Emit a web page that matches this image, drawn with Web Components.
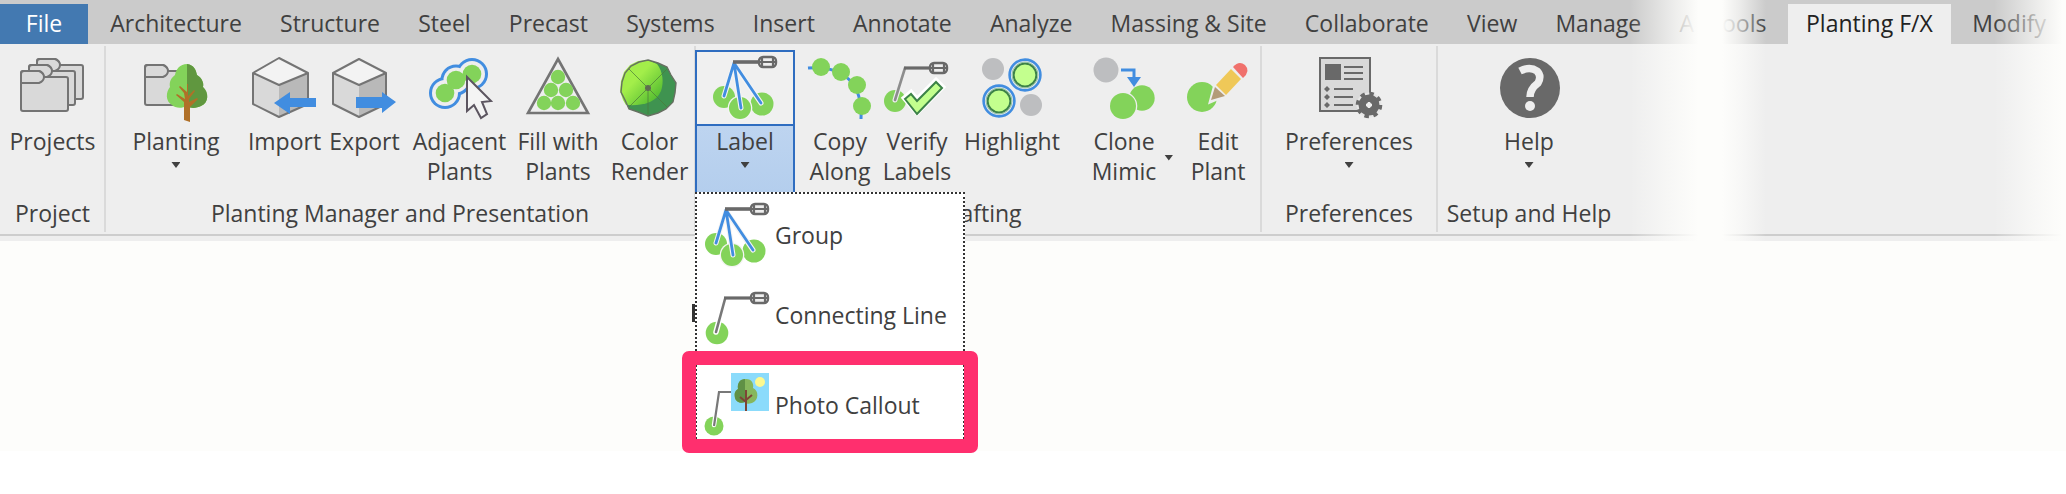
<!DOCTYPE html>
<html lang="en">
<head>
<meta charset="utf-8">
<title>Planting F/X</title>
<style>
  body {
    margin: 0;
    min-height: 100vh;
    background: #fff;
    color: #404040;
    font: 23px/30px "Open Sans", "Noto Sans", sans-serif;
  }
</style>
</head>
<body>
<planting-app></planting-app>

<script>
const CAPSULE = (x, y) => `
  <rect x="${x + 1}" y="${y - 5}" width="17" height="10" rx="4" fill="#eee" stroke="#696969" stroke-width="2.4"/>
  <path d="M${x} ${y}h19M${x + 4} ${y - 5}v10M${x + 15} ${y - 5}v10" stroke="#696969" stroke-width="2.2"/>`;

const FOLDER = (x, y, w, h) => `
  <g transform="translate(${x} ${y})" fill="#d9d9d9" stroke="#747474" stroke-width="2" stroke-linejoin="round">
    <path d="M0 2q0-2 2-2h16q2 0 3 2l2 4h${w - 25}q2 0 2 2v${h - 10}q0 2-2 2H2q-2 0-2-2z"/>
    <path d="M0 12V3q0-3 3-3h15q5 2 5 6t-5 6z"/>
  </g>`;

const CUBE = (w, top) => `
  <path d="M1 17L27 ${top}L${w} 17L27 29z" fill="#f3f3f3"/>
  <path d="M1 17L27 29V61L1 48z" fill="#d9d9d9"/>
  <path d="M27 29L${w} 17V48L27 61z" fill="#b9b9b9"/>
  <path d="M27 ${top}L${w} 17V48L27 61L1 48V17zM1 17L27 29L${w} 17" fill="none" stroke="#747474" stroke-width="2" stroke-linejoin="round"/>`;

const TARGET = (x, y) => `
  <circle cx="${x}" cy="${y}" r="15.4" fill="#eee" stroke="#418de0" stroke-width="2.6"/>
  <circle cx="${x}" cy="${y}" r="11.4" fill="#c3ff8e" stroke="#3c8248" stroke-width="2"/>
  <circle cx="${x}" cy="${y}" r="13" fill="none" stroke="#8ec0a0" stroke-width="1"/>`;

const ICONS = {
  projects: FOLDER(17, 3, 46, 40) + FOLDER(9, 9, 46, 40) + FOLDER(1, 15, 47, 40),
  planting: FOLDER(1, 9, 46, 40) + `
    <path d="M43 8c7 1 9 6 10 11 5 3 7 8 6 12 6 5 6 16-2 19-4 2-10 3-14 0-6 3-12 2-15-1-7-4-6-13-2-18-1-5 1-9 5-12 1-6 5-11 12-11z" fill="#83d35a"/>
    <path d="M43 8c7 1 9 6 10 11 5 3 7 8 6 12 6 5 6 16-2 19-4 2-10 3-14 0z" fill="#60973f"/>
    <path d="M40 64V46l-8-7 1-1 8 5-1-6-5-6 1-1 7 6v-8h1v12l6-6 1 1-6 8v3l8-4 1 1-8 8v15z" fill="#b07028"/>`,
  import: CUBE(56, 2) + '<path d="M22 47L38 36v6h26v9H38v7z" fill="#418de0"/>',
  export: CUBE(54, 3) + '<path d="M64 46L50 36v5H24v11h26v5z" fill="#418de0"/>',
  adjacent: `
    <g fill="#418de0"><circle cx="17" cy="37" r="16"/><circle cx="28" cy="24" r="15.5"/><circle cx="44" cy="18" r="16"/></g>
    <g fill="#eee"><circle cx="17" cy="37" r="13"/><circle cx="28" cy="24" r="12.5"/><circle cx="44" cy="18" r="13"/></g>
    <g fill="#83d35a"><circle cx="17" cy="37" r="9.3"/><circle cx="28" cy="24" r="9.3"/><circle cx="44" cy="18" r="9.3"/></g>
    <path d="M39 21v34l7-6 7 13 6-4-5-12 9-1z" fill="#f4f4f4" stroke="#5c5560" stroke-width="2"/>`,
  fill: `
    <path d="M32 3L62 57H2z" fill="none" stroke="#747474" stroke-width="2.6"/>
    <g fill="#83d35a">
      <circle cx="32" cy="21" r="7.2"/><circle cx="25" cy="34" r="7.2"/><circle cx="40" cy="34" r="7.2"/>
      <circle cx="18" cy="47" r="7.2"/><circle cx="32" cy="47" r="7.2"/><circle cx="47" cy="47" r="7.2"/>
    </g>`,
  render: `
    <defs><linearGradient id="lit" x1="0" y1="0" x2="1" y2="1">
      <stop offset=".4" stop-color="#a3ee4a"/><stop offset=".9" stop-color="#4fb92f"/></linearGradient></defs>
    <path d="M31 4l10 3 9 4 4 8 5 8-1 10-2 9-7 7-8 4-10 3-10-4-9-3-4-9-4-8 1-10 3-9 6-7 8-4z" fill="#3f9350"/>
    <path d="M31 4l9 4c6 8 7 18 4 27-5 11-16 15-35 14l-3-5-3-9 1-10 3-9 6-7 8-4z" fill="url(#lit)"/>
    <path d="M31 32V58M31 32L12 13M31 32L50 51M31 32L12 51M31 32L50 13" stroke="#4a7a3a" stroke-width=".7"/>
    <path d="M31 4l10 3 9 4 4 8 5 8-1 10-2 9-7 7-8 4-10 3-10-4-9-3-4-9-4-8 1-10 3-9 6-7 8-4z" fill="none" stroke="#667061" stroke-width="1.4"/>
    <circle cx="31" cy="32" r="3" fill="#5e6d50"/>`,
  label: `
    <circle cx="11" cy="41" r="11" fill="#83d35a"/><circle cx="49" cy="48" r="11.5" fill="#83d35a"/>
    <circle cx="27" cy="52" r="12.3" fill="#f4f4f4"/><circle cx="27" cy="52" r="11" fill="#83d35a"/>
    <path d="M21 8L11 40M21 8l7 44M21 8l27 39" stroke="#f4f4f4" stroke-width="5" stroke-linecap="round"/>
    <path d="M21 7L11 40M21 7l7 45M21 7l27 40" stroke="#418de0" stroke-width="2.8" stroke-linecap="round"/>
    <path d="M20 6h26" stroke="#696969" stroke-width="3.6"/>` + CAPSULE(45, 6),
  copy: `
    <path d="M0 12C36 9 55 28 53 63" fill="none" stroke="#418de0" stroke-width="3"/>
    <g fill="#83d35a"><circle cx="13" cy="11" r="9"/><circle cx="33" cy="16" r="9"/><circle cx="49" cy="29" r="9"/><circle cx="54" cy="50" r="9"/></g>`,
  verify: `
    <circle cx="10" cy="45" r="11" fill="#83d35a"/>
    <path d="M10 44L20 12" stroke="#eee" stroke-width="5" stroke-linecap="round"/>
    <path d="M10 44L20 12" stroke="#8d8d8d" stroke-width="2.6" stroke-linecap="round"/>
    <path d="M19 12h27" stroke="#696969" stroke-width="3.2"/>` + CAPSULE(44, 12) + `
    <path d="M20 42l6-5 6 7 19-19 6 6-25 25z" fill="#fff" stroke="#fff" stroke-width="6"/>
    <path d="M20 43l6-5 6 7 19-19 6 6-25 26z" fill="#c3ff8e" stroke="#3c8248" stroke-width="2"/>`,
  highlight: `
    <circle cx="13" cy="13" r="11" fill="#bdbec0"/><circle cx="51" cy="49" r="11" fill="#bdbec0"/>` + TARGET(45, 19) + TARGET(19, 45),
  clone: `
    <circle cx="14" cy="14" r="12.5" fill="#bdbec0"/>
    <circle cx="50" cy="42" r="12.7" fill="#83d35a"/>
    <circle cx="31" cy="50" r="14.3" fill="#eee"/><circle cx="31" cy="50" r="13" fill="#83d35a"/>
    <path d="M29 14h13v8" fill="none" stroke="#418de0" stroke-width="3"/>
    <path d="M35 21h14l-7 10z" fill="#418de0"/>`,
  edit: `
    <circle cx="16" cy="41" r="15" fill="#83d35a"/>
    <path d="M25 45L29 30 47 12l9 9-17 18z" fill="#eee" stroke="#eee" stroke-width="4"/>
    <path d="M25 44L29 31l10 9z" fill="#b39b78"/>
    <path d="M30 29L45 13l10 10-15 16z" fill="#efc858"/>
    <path d="M47 11q6-7 12-2 6 6-2 13z" fill="#f0716c"/>`,
  preferences: `
    <rect x="3" y="2" width="50" height="53" fill="#d9d9d9" stroke="#696969" stroke-width="2"/>
    <path d="M8 8h16v16H8z" fill="#696969"/>
    <path d="M27 11h19M27 17h19M27 23h19M17 33h19M17 41h19M17 49h19" stroke="#696969" stroke-width="2"/>
    <path d="M10 30l3 3-3 3-3-3zM10 38l3 3-3 3-3-3zM10 46l3 3-3 3-3-3z" fill="#696969"/>
    <circle cx="52" cy="49" r="12.5" fill="#e6e6e6"/>
    <circle cx="52" cy="49" r="11.3" fill="none" stroke="#696969" stroke-width="4" stroke-dasharray="4.4 4.47"/>
    <circle cx="52" cy="49" r="6.5" fill="none" stroke="#696969" stroke-width="8"/>
    <path d="M52 46v6M49 49h6" stroke="#eee" stroke-width="2.4"/>`,
  help: `
    <circle cx="33" cy="32" r="30" fill="#696969"/>
    <path d="M23 15q10-5 17 0 5 5 1 12-8 6-8 14" fill="none" stroke="#eee" stroke-width="7.5"/>
    <circle cx="33" cy="50" r="5" fill="#eee"/>`,
  connecting: `
    <circle cx="12" cy="50" r="11.3" fill="#83d35a"/>
    <path d="M11 49L20 16" stroke="#fff" stroke-width="5.5" stroke-linecap="round"/>
    <path d="M11 49L20 16" stroke="#787878" stroke-width="2.6" stroke-linecap="round"/>
    <path d="M19 15h27" stroke="#696969" stroke-width="3.2"/>` + CAPSULE(45, 15),
  photo: `
    <circle cx="9" cy="53" r="9.5" fill="#83d35a"/>
    <path d="M9 52L14 19" stroke="#fff" stroke-width="4.5" stroke-linecap="round"/>
    <path d="M9 53L14 19H26" fill="none" stroke="#787878" stroke-width="2.2"/>
    <path d="M26 0h38v38H26z" fill="#8bdbfb"/>
    <circle cx="55" cy="9" r="5" fill="#fdf98f"/>
    <path d="M41 6c6 0 8 5 7 9 6 2 6 13-1 15-4 1-6 1-7-1-4 2-9 0-10-4-1-5 0-7 3-9-1-6 3-10 8-10z" fill="#86b75c"/>
    <path d="M40 6c-5 0-8 4-7 10-3 2-4 4-3 9 1 4 6 6 10 4z" fill="#5f9145"/>
    <path d="M41 38V17M41 29l-6-5M41 27l6-5" stroke="#7d4436" stroke-width="2"/>`,
};

class FxIcon extends HTMLElement {
  constructor() {
    super();
    this.root = this.attachShadow({mode: 'open'});
    this.root.innerHTML = `
      <style>
        :host { display: block; width: 64px; height: 64px; flex: none; }
        svg { display: block; width: 100%; height: 100%; overflow: visible; }
      </style>
      <svg viewBox="0 0 64 64" aria-hidden="true"></svg>
    `;
  }

  static get observedAttributes() {
    return ['name'];
  }

  attributeChangedCallback(name, oldVal, newVal) {
    this.root.querySelector('svg').innerHTML = ICONS[newVal] || '';
  }
}

class RibbonTab extends HTMLElement {
  constructor() {
    super();
    this.root = this.attachShadow({mode: 'open'});
    this.root.innerHTML = `
      <style>
        :host { display: flex; }
        button {
          padding: 0 0 2px;
          border: 0;
          background: none;
          color: inherit;
          font: inherit;
          white-space: nowrap;
          cursor: pointer;
        }
        :host([kind=file]) button { width: 88px; background: #4379b1; color: #fff; }
        :host([kind=active]) button { padding: 0 18px 2px; background: #eee; color: #222; }
      </style>
      <button type="button"><slot></slot></button>
    `;
  }
}

class RibbonSection extends HTMLElement {
  constructor() {
    super();
    this.root = this.attachShadow({mode: 'open'});
    this.root.innerHTML = `
      <style>
        :host {
          position: relative;
          display: flex;
          flex-direction: column;
          min-width: 0;
          background: #eee;
        }
        nav {
          display: flex;
          justify-content: space-between;
          box-sizing: border-box;
          height: 44px;
          padding: 4px var(--tabs-end, 0) 0 0;
          background: #cbcbcb;
        }
        .panels {
          display: flex;
          flex: 1;
          box-sizing: border-box;
          min-height: 192px;
          margin-bottom: 5px;
          padding-top: 2px;
          border-bottom: 2px solid #cdcdcd;
        }
        /* soft torn edges where the ribbon is cut */
        :host::before, :host::after {
          content: "";
          position: absolute;
          top: 0;
          bottom: 0;
          pointer-events: none;
        }
        :host::before {
          left: 0;
          width: var(--fade-left, 0);
          background: linear-gradient(to left, #fdfdfb00, #fdfdfbaa 60%, #fdfdfb);
        }
        :host::after {
          right: 0;
          width: var(--fade-right, 0);
          background: linear-gradient(to right, #fdfdfb00, #fdfdfbaa 60%, #fdfdfb 95%);
        }
      </style>
      <nav><slot name="tab"></slot></nav>
      <div class="panels"><slot></slot></div>
    `;
  }
}

class RibbonPanel extends HTMLElement {
  constructor() {
    super();
    this.root = this.attachShadow({mode: 'open'});
    this.root.innerHTML = `
      <style>
        :host {
          display: flex;
          flex-direction: column;
          min-width: 0;
          margin-bottom: 2px;
          box-shadow: 1px 0 #dadada, inset -1px 0 #dadada;
        }
        :host([last]) { box-shadow: none; }
        .tools { display: flex; flex: 1; }
        .tools::after { content: ""; flex: var(--tail, 0) 1 0; }
        .title { height: 34px; padding-top: 6px; text-align: center; white-space: nowrap; }
      </style>
      <div class="tools"><slot></slot></div>
      <div class="title"><slot name="title"></slot></div>
    `;
  }
}

class RibbonTool extends HTMLElement {
  constructor() {
    super();
    this.root = this.attachShadow({mode: 'open'});
    this.root.innerHTML = `
      <style>
        :host {
          position: relative;
          display: flex;
          justify-content: center;
          min-width: 0;
        }
        button {
          display: flex;
          flex-direction: column;
          align-items: center;
          padding: 10px 0 0;
          border: 0;
          background: none;
          color: inherit;
          font: inherit;
          white-space: nowrap;
          cursor: pointer;
        }
        .caption { padding-top: 6px; }
        .arrow {
          display: none;
          width: 9px;
          height: 6px;
          margin-top: 6px;
          background: #404040;
          clip-path: polygon(0 0, 100% 0, 50% 100%);
        }
        :host([arrow]) .arrow { display: block; }
        :host([arrow=side]) button {
          display: grid;
          grid-template-columns: auto 9px;
          column-gap: 8px;
          align-content: start;
          justify-items: center;
        }
        :host([arrow=side]) .arrow { margin-top: 9px; align-self: center; }
        :host([arrow=side]) .picture { grid-column: 1; }
        :host([arrow=side]) .caption { grid-column: 1; }

        :host([open]) button {
          width: 100%;
          margin-top: 4px;
          padding: 0;
          border: 2px solid #2f6dc0;
          border-bottom: 0;
          background: linear-gradient(#c8dbf3, #b4ceed);
        }
        :host([open]) .picture {
          display: flex;
          justify-content: center;
          box-sizing: border-box;
          width: 100%;
          height: 74px;
          padding-top: 4px;
          border-bottom: 2px solid #2f6dc0;
          background: #f0f0f0;
        }
        :host([open]) .caption { padding-top: 0; }
      </style>
      <button type="button">
        <span class="picture"><fx-icon></fx-icon></span>
        <span class="caption"><slot></slot></span>
        <span class="arrow"></span>
      </button>
      <slot name="menu"></slot>
    `;
    this.root.querySelector('fx-icon').setAttribute('name', this.getAttribute('icon'));
  }
}

class DropMenu extends HTMLElement {
  constructor() {
    super();
    this.root = this.attachShadow({mode: 'open'});
    this.root.innerHTML = `
      <style>
        :host {
          position: absolute;
          z-index: 2;
          top: 100%;
          left: 0;
          box-sizing: border-box;
          width: 270px;
          padding-top: 1px;
          border: 2px dotted #333;
          border-bottom: 0;
          background: #fff;
        }
      </style>
      <slot></slot>
    `;
  }
}

class MenuItem extends HTMLElement {
  constructor() {
    super();
    this.root = this.attachShadow({mode: 'open'});
    this.root.innerHTML = `
      <style>
        :host { display: block; }
        :host([marked]) {
          margin: -4px -15px -14px;
          border: 14px solid #ff2f6e;
          border-radius: 7px;
        }
        button {
          display: flex;
          align-items: center;
          gap: 6px;
          width: 100%;
          height: 80px;
          padding: 0 8px;
          border: 0;
          background: none;
          color: inherit;
          font: inherit;
          white-space: nowrap;
          cursor: pointer;
        }
        :host([marked]) button { height: 74px; padding: 6px 9px 0; }
      </style>
      <button type="button" role="menuitem"><fx-icon></fx-icon><slot></slot></button>
    `;
    this.root.querySelector('fx-icon').setAttribute('name', this.getAttribute('icon'));
  }
}

class PlantingApp extends HTMLElement {
  constructor() {
    super();
    this.root = this.attachShadow({mode: 'open'});
    this.root.innerHTML = `
      <style>
        :host { display: block; }
        .ribbon {
          position: relative;
          z-index: 1;
          display: flex;
          gap: 20px;
          background: #fdfdfb;
        }
        .main { flex: 1702 1 0; --fade-right: 72px; --tabs-end: 8px; }
        .extra { flex: 344 1 0; --fade-left: 44px; --fade-right: 72px; --tabs-end: 20px; }
        .main [slot=tab]:nth-child(2) { margin-left: -16px; }
        ribbon-panel, ribbon-tool { flex: var(--span) 1 0; }
        .canvas { display: flex; height: 210px; background: #fdfdfb; }
        .canvas::before {
          content: "";
          width: 10px;
          height: 18px;
          margin: 63px 0 0 33.5%;
          background: #333;
        }
      </style>
      <div class="ribbon">
        <ribbon-section class="main">
          <ribbon-tab slot="tab" kind="file">File</ribbon-tab>
          <ribbon-tab slot="tab">Architecture</ribbon-tab>
          <ribbon-tab slot="tab">Structure</ribbon-tab>
          <ribbon-tab slot="tab">Steel</ribbon-tab>
          <ribbon-tab slot="tab">Precast</ribbon-tab>
          <ribbon-tab slot="tab">Systems</ribbon-tab>
          <ribbon-tab slot="tab">Insert</ribbon-tab>
          <ribbon-tab slot="tab">Annotate</ribbon-tab>
          <ribbon-tab slot="tab">Analyze</ribbon-tab>
          <ribbon-tab slot="tab">Massing &amp; Site</ribbon-tab>
          <ribbon-tab slot="tab">Collaborate</ribbon-tab>
          <ribbon-tab slot="tab">View</ribbon-tab>
          <ribbon-tab slot="tab">Manage</ribbon-tab>
          <ribbon-tab slot="tab">A</ribbon-tab>

          <ribbon-panel style="--span: 105">
            <ribbon-tool icon="projects" style="--span: 1">Projects</ribbon-tool>
            <span slot="title">Project</span>
          </ribbon-panel>
          <ribbon-panel style="--span: 590">
            <ribbon-tool icon="planting" arrow style="--span: 142">Planting</ribbon-tool>
            <ribbon-tool icon="import" style="--span: 75">Import</ribbon-tool>
            <ribbon-tool icon="export" style="--span: 85">Export</ribbon-tool>
            <ribbon-tool icon="adjacent" style="--span: 105">Adjacent<br>Plants</ribbon-tool>
            <ribbon-tool icon="fill" style="--span: 92">Fill with<br>Plants</ribbon-tool>
            <ribbon-tool icon="render" style="--span: 91">Color<br>Render</ribbon-tool>
            <span slot="title">Planting Manager and Presentation</span>
          </ribbon-panel>
          <ribbon-panel style="--span: 566; --tail: 15">
            <ribbon-tool icon="label" arrow open style="--span: 100">Label
              <drop-menu slot="menu" role="menu">
                <menu-item icon="label">Group</menu-item>
                <menu-item icon="connecting">Connecting Line</menu-item>
                <menu-item icon="photo" marked>Photo Callout</menu-item>
              </drop-menu>
            </ribbon-tool>
            <ribbon-tool icon="copy" style="--span: 90">Copy<br>Along</ribbon-tool>
            <ribbon-tool icon="verify" style="--span: 64">Verify<br>Labels</ribbon-tool>
            <ribbon-tool icon="highlight" style="--span: 126">Highlight</ribbon-tool>
            <ribbon-tool icon="clone" arrow="side" style="--span: 115">Clone<br>Mimic</ribbon-tool>
            <ribbon-tool icon="edit" style="--span: 56">Edit<br>Plant</ribbon-tool>
            <span slot="title">Drafting</span>
          </ribbon-panel>
          <ribbon-panel style="--span: 176">
            <ribbon-tool icon="preferences" arrow style="--span: 1">Preferences</ribbon-tool>
            <span slot="title">Preferences</span>
          </ribbon-panel>
          <ribbon-panel last style="--span: 184">
            <ribbon-tool icon="help" arrow style="--span: 1">Help</ribbon-tool>
            <span slot="title">Setup and Help</span>
          </ribbon-panel>
          <ribbon-panel last style="--span: 81"></ribbon-panel>
        </ribbon-section>
        <ribbon-section class="extra">
          <ribbon-tab slot="tab">ools</ribbon-tab>
          <ribbon-tab slot="tab" kind="active">Planting F/X</ribbon-tab>
          <ribbon-tab slot="tab">Modify</ribbon-tab>
        </ribbon-section>
      </div>
      <div class="canvas"></div>
    `;
  }
}

customElements.define('fx-icon', FxIcon);
customElements.define('ribbon-tab', RibbonTab);
customElements.define('ribbon-section', RibbonSection);
customElements.define('ribbon-panel', RibbonPanel);
customElements.define('ribbon-tool', RibbonTool);
customElements.define('drop-menu', DropMenu);
customElements.define('menu-item', MenuItem);
customElements.define('planting-app', PlantingApp);
</script>
</body>
</html>
